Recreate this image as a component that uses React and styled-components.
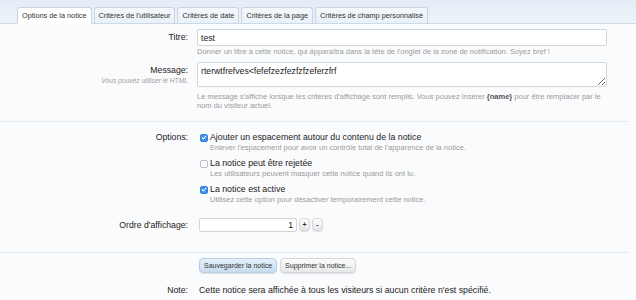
import styled, { createGlobalStyle } from "styled-components"

const GlobalStyle = createGlobalStyle`
  body {
    margin: 0;
    background: #fafbfd;
    font-family: "Liberation Sans", Arial, sans-serif;
    color: #2b2b2b;
  }
`

const tabs = [
  "Options de la notice",
  "Critères de l'utilisateur",
  "Critères de date",
  "Critères de la page",
  "Critères de champ personnalisé",
]

const options = [
  {
    label: "Ajouter un espacement autour du contenu de la notice",
    explain: "Enlever l'espacement pour avoir un contrôle total de l'apparence de la notice.",
    checked: true,
  },
  {
    label: "La notice peut être rejetée",
    explain: "Les utilisateurs peuvent masquer cette notice quand ils ont lu.",
    checked: false,
  },
  {
    label: "La notice est active",
    explain: "Utilisez cette option pour désactiver temporairement cette notice.",
    checked: true,
  },
]

const App = () => {
  return <div>
    <GlobalStyle />
    <TabBar>
      {tabs.map((t, i) => <Tab key={t} $active={i === 0}>{t}</Tab>)}
    </TabBar>

    <Section $top={5} $bottom={11}>
      <Row>
        <Label>Titre:</Label>
        <Field>
          <TextInput readOnly value="test" />
          <Explain>Donner un titre à cette notice, qui apparaîtra dans la tête de l'onglet de la zone de notification. Soyez bref !</Explain>
        </Field>
      </Row>
      <Row $gap={6}>
        <Label $tight>
          Message:
          <Hint>Vous pouvez utiliser le HTML</Hint>
        </Label>
        <Field>
          <TextArea readOnly defaultValue="rterwtfrefves<fefefzezfezfzfzeferzfrf" />
          <Explain $top={5}>
            Le message s'affiche lorsque les critères d'affichage sont remplis. Vous pouvez insérer <b>{"{name}"}</b> pour être remplacer par le nom du visiteur actuel.
          </Explain>
        </Field>
      </Row>
    </Section>

    <Divider />

    <Section $top={10} $bottom={20}>
      <Row>
        <Label $line={11}>Options:</Label>
        <OptionList>
          {options.map(o => <li key={o.label}>
            <CheckLine>
              <Check $checked={o.checked}>
                {o.checked && <svg width="7" height="7" viewBox="0 0 8 8">
                  <path d="M1.5 4.2 L3.3 6 L6.6 2" fill="none" stroke="#fff" strokeWidth="1.4" strokeLinecap="round" strokeLinejoin="round" />
                </svg>}
              </Check>
              {o.label}
            </CheckLine>
            <OptionExplain>{o.explain}</OptionExplain>
          </li>)}
        </OptionList>
      </Row>
      <Row $gap={12}>
        <Label $line={14}>Ordre d'affichage:</Label>
        <Spinner>
          <NumberBox readOnly value="1" />
          <SpinButton>+</SpinButton>
          <SpinButton>-</SpinButton>
        </Spinner>
      </Row>
    </Section>

    <Divider $blue />

    <Section $top={5} $bottom={8}>
      <Row>
        <span />
        <Buttons>
          <Button $primary>Sauvegarder la notice</Button>
          <Button>Supprimer la notice...</Button>
        </Buttons>
      </Row>
      <Row $gap={12}>
        <Label $line={10}>Note:</Label>
        <Note>Cette notice sera affichée à tous les visiteurs si aucun critère n'est spécifié.</Note>
      </Row>
    </Section>
  </div>;
};

export default App;

const TabBar = styled.div`
  height: 24px;
  box-sizing: border-box;
  display: flex;
  align-items: flex-end;
  gap: 2px;
  padding-left: 17px;
  background: linear-gradient(#e3ecf6, #edf3f9);
  border-bottom: 1px solid #cbd9e8;
`

const Tab = styled.div`
  height: 17px;
  box-sizing: border-box;
  padding: 0 4px;
  margin-bottom: -1px;
  border: 1px solid #c6d5e5;
  border-bottom: ${p => p.$active ? "1px solid #ffffff" : "1px solid #cbd9e8"};
  border-radius: 3px 3px 0 0;
  background: ${p => p.$active ? "#ffffff" : "linear-gradient(#f4f8fc, #e9f0f7)"};
  color: #333;
  font-size: 7.3px;
  line-height: 16px;
  white-space: nowrap;
`

const Section = styled.div`
  padding-top: ${p => p.$top}px;
  padding-bottom: ${p => p.$bottom}px;
`

const Row = styled.div`
  display: grid;
  grid-template-columns: 188px 410px;
  column-gap: 9px;
  align-items: start;
  margin-top: ${p => p.$gap || 0}px;
`

const Label = styled.div`
  text-align: right;
  font-size: 8.7px;
  line-height: ${p => p.$tight ? "13px" : `${p.$line || 17}px`};
  padding-top: ${p => p.$tight ? "2px" : "0"};
  color: #222;
`

const Hint = styled.div`
  font-size: 6.7px;
  font-style: italic;
  line-height: 8px;
  color: #a0a0a0;
`

const Field = styled.div`
  display: flex;
  flex-direction: column;
`

const TextInput = styled.input`
  height: 17px;
  box-sizing: border-box;
  border: 1px solid #cfd6de;
  border-radius: 2px;
  background: #fff;
  padding: 0 3px;
  font-family: inherit;
  font-size: 8.7px;
  color: #222;
  outline: none;
`

const TextArea = styled.textarea`
  height: 25px;
  box-sizing: border-box;
  border: 1px solid #cfd6de;
  border-radius: 2px;
  background: #fff;
  padding: 3px 3px;
  font-family: inherit;
  font-size: 8.7px;
  line-height: 10px;
  color: #222;
  outline: none;
  resize: vertical;
`

const Explain = styled.div`
  margin-top: ${p => p.$top || 1}px;
  font-size: 7.5px;
  line-height: 9px;
  color: #9b9b9b;

  b {
    color: #555;
  }
`

const OptionList = styled.ul`
  list-style: none;
  margin: 0;
  padding: 0 0 0 3px;
  display: flex;
  flex-direction: column;
  gap: 4.5px;
`

const CheckLine = styled.div`
  display: flex;
  align-items: center;
  gap: 2px;
  font-size: 8.8px;
  line-height: 11px;
  color: #222;
`

const Check = styled.span`
  width: 8px;
  height: 8px;
  box-sizing: border-box;
  border-radius: 2px;
  display: flex;
  align-items: center;
  justify-content: center;
  background: ${p => p.$checked ? "#3d8ee8" : "#fff"};
  border: 1px solid ${p => p.$checked ? "#3583dc" : "#b9bec4"};
`

const OptionExplain = styled.div`
  padding-left: 10px;
  font-size: 7.5px;
  line-height: 10.5px;
  color: #9b9b9b;
`

const Spinner = styled.div`
  display: flex;
  align-items: center;
  gap: 2px;
  padding-left: 2px;
`

const NumberBox = styled.input`
  width: 98px;
  height: 14px;
  box-sizing: border-box;
  border: 1px solid #cfd6de;
  border-radius: 2px;
  background: #fff;
  padding: 0 3px;
  text-align: right;
  font-family: inherit;
  font-size: 8.7px;
  color: #222;
  outline: none;
`

const SpinButton = styled.button`
  width: 11px;
  height: 13px;
  padding: 0;
  border: 1px solid #d6d6d6;
  border-radius: 4px;
  background: linear-gradient(#ffffff, #e6e7e9);
  box-shadow: 0 1px 1px rgba(0, 0, 0, 0.12);
  font-family: inherit;
  font-size: 7px;
  font-weight: bold;
  line-height: 11px;
  color: #333;
`

const Divider = styled.hr`
  width: 628px;
  margin: 0;
  border: none;
  border-top: 1px solid ${p => p.$blue ? "#dfeaee" : "#e6eaef"};
`

const Buttons = styled.div`
  display: flex;
  gap: 3px;
  padding-left: 2px;
`

const Button = styled.button`
  height: 15px;
  padding: 0 4px;
  border: 1px solid ${p => p.$primary ? "#b9cde2" : "#d4d6d9"};
  border-radius: 4px;
  background: ${p => p.$primary
    ? "linear-gradient(#e6f0fa, #c8dcf0)"
    : "linear-gradient(#fbfbfb, #e7e8ea)"};
  box-shadow: 0 1px 1px rgba(0, 0, 0, 0.1);
  font-family: inherit;
  font-size: 7px;
  line-height: 13px;
  color: #333;
  white-space: nowrap;
`

const Note = styled.div`
  padding-left: 2px;
  font-size: 8.8px;
  line-height: 10px;
  color: #222;
`
